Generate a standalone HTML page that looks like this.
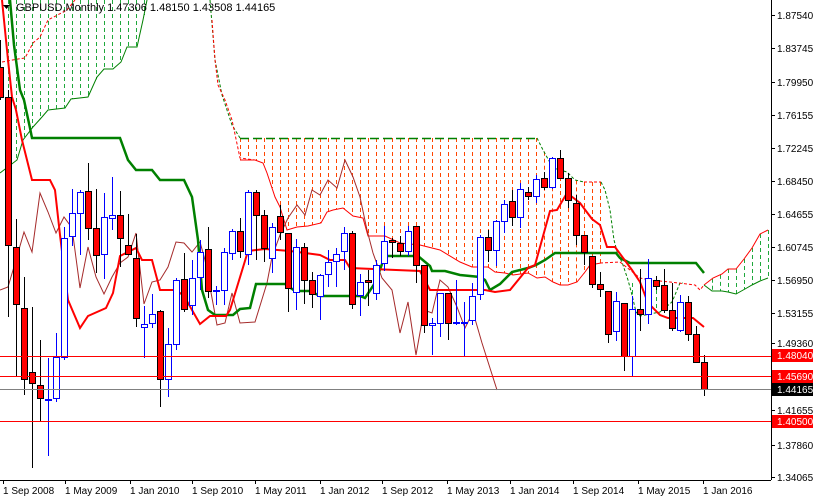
<!DOCTYPE html>
<html><head><meta charset="utf-8">
<style>
html,body{margin:0;padding:0;background:#fff;}
svg{display:block;font-family:"Liberation Sans",sans-serif;}
</style></head>
<body>
<svg id="s" width="813" height="499" viewBox="0 0 813 499" xmlns="http://www.w3.org/2000/svg">
<rect width="813" height="499" fill="#fff"/>
<g id="clouds"></g>
<g id="lines" fill="none"></g>
<g id="candles"></g>
<line x1="0" y1="356.5" x2="771" y2="356.5" stroke="#f00"/>
<line x1="0" y1="376.5" x2="771" y2="376.5" stroke="#f00"/>
<line x1="0" y1="389.5" x2="771" y2="389.5" stroke="#808080"/>
<line x1="0" y1="421.5" x2="771" y2="421.5" stroke="#f00"/>
<line x1="771.5" y1="0" x2="771.5" y2="480" stroke="#000"/>
<line x1="0" y1="480.5" x2="771" y2="480.5" stroke="#000"/>
<g id="ticks" stroke="#000"></g>
<g font-size="10" fill="#000">
<text x="777" y="19">1.87540</text>
<text x="777" y="52">1.83745</text>
<text x="777" y="86">1.79950</text>
<text x="777" y="119">1.76155</text>
<text x="777" y="152">1.72245</text>
<text x="777" y="185">1.68450</text>
<text x="777" y="218">1.64655</text>
<text x="777" y="251">1.60745</text>
<text x="777" y="284">1.56950</text>
<text x="777" y="317">1.53155</text>
<text x="777" y="347">1.49360</text>
<text x="777" y="414">1.41655</text>
<text x="777" y="449">1.37860</text>
<text x="777" y="481">1.34065</text>
</g>
<rect x="772" y="349" width="41" height="13" fill="#f00"/>
<text x="777" y="359" font-size="10" fill="#fff">1.48040</text>
<rect x="772" y="370" width="41" height="13" fill="#f00"/>
<text x="777" y="380" font-size="10" fill="#fff">1.45690</text>
<rect x="772" y="383" width="41" height="13" fill="#000"/>
<text x="777" y="393" font-size="10" fill="#fff">1.44165</text>
<rect x="772" y="415" width="41" height="13" fill="#f00"/>
<text x="777" y="425" font-size="10" fill="#fff">1.40500</text>
<g font-size="10" fill="#000">
<text x="3" y="494">1 Sep 2008</text>
<text x="65" y="494">1 May 2009</text>
<text x="130" y="494">1 Jan 2010</text>
<text x="192" y="494">1 Sep 2010</text>
<text x="255" y="494">1 May 2011</text>
<text x="320" y="494">1 Jan 2012</text>
<text x="382" y="494">1 Sep 2012</text>
<text x="447" y="494">1 May 2013</text>
<text x="510" y="494">1 Jan 2014</text>
<text x="573" y="494">1 Sep 2014</text>
<text x="638" y="494">1 May 2015</text>
<text x="703" y="494">1 Jan 2016</text>
</g>
<rect x="0" y="0" width="260" height="14" fill="none"/>
<path d="M3 5 L10 5 L6.5 9 Z" fill="#000"/>
<text x="16" y="11" font-size="11" fill="#000">GBPUSD,Monthly  1.47306 1.48150 1.43508 1.44165</text>
</svg>
<script>
var NS="http://www.w3.org/2000/svg";
function el(p,t,a){var e=document.createElementNS(NS,t);for(var k in a)e.setAttribute(k,a[k]);document.getElementById(p).appendChild(e);return e;}
function interp(pts,x){for(var i=0;i<pts.length-1;i++){if(x>=pts[i][0]&&x<=pts[i+1][0]){var t=(x-pts[i][0])/((pts[i+1][0]-pts[i][0])||1);return pts[i][1]+t*(pts[i+1][1]-pts[i][1]);}}return null;}
function pl(p,pts,stroke,w,dash){var a={points:pts.map(function(q){return q.join(",")}).join(" "),stroke:stroke,"stroke-width":w,fill:"none"};if(dash)a["stroke-dasharray"]=dash;el(p,"polyline",a);}
// left green cloud
var gLow=[[0,173],[17,160],[23,140],[33,127],[42,117],[48,110],[65,108],[71,99],[88,97],[97,77],[104,69],[113,69],[121,62],[127,47],[137,47],[143,20],[147,0]];
for(var x=8;x<=144;x+=8){var y=interp(gLow,x);el("clouds","line",{x1:x+.5,y1:0,x2:x+.5,y2:y,stroke:"#1fa83c","stroke-dasharray":"4 3"});}
pl("clouds",gLow,"#008000",1);
pl("clouds",[[2,62],[18,59],[25,58],[33,43],[40,37],[48,20],[67,10],[75,0]],"#f00",1,"3 2");
// orange cloud
var oTop=[[240,138],[537,138],[543,150],[553,168],[567,172],[575,180],[580,182],[601,182]];
var oLow=[[240,160],[255,160],[263,163],[267,173],[272,188],[275,197],[280,207],[283,217],[287,230],[297,227],[308,226],[321,223],[327,212],[333,210],[343,208],[353,216],[363,218],[368,236],[385,236],[400,243],[420,245],[440,250],[460,262],[472,267],[488,267],[495,272],[505,273],[513,275],[528,273],[537,278],[545,277],[553,282],[560,285],[568,285],[577,282],[585,272],[590,265],[601,263]];
for(var x=240;x<=600;x+=8){var a=interp(oTop,x),b=interp(oLow,x);if(a!=null&&b!=null&&b>a)el("clouds","line",{x1:x+.5,y1:a,x2:x+.5,y2:b,stroke:"#ff4500","stroke-dasharray":"4 3"});}
pl("clouds",[[240,138.5],[537,138.5]],"#008000",1.5,"9 4");
pl("clouds",[[537,138],[543,150],[553,168],[567,172],[575,180],[584,182]],"#008000",1,"3 2");
pl("clouds",[[584,182],[601,182]],"#f00",1,"3 2");
pl("clouds",oLow,"#f00",1);
pl("clouds",[[210,0],[215,60],[222,95],[232,125],[240,138]],"#008000",1,"3 2");
pl("clouds",[[212,20],[215,60],[218,85],[225,100],[232,120],[240,158],[255,160]],"#f00",1,"3 2");
pl("clouds",[[601,182],[605,190],[610,210],[614,240],[618,255],[622,262],[628,280],[632,295],[636,312],[640,316],[660,312],[672,302],[680,283],[683,283]],"#008000",1,"3 2");
for(var x=632;x<=680;x+=8){var b=interp([[628,303],[640,316],[660,312],[672,302],[680,283]],x);el("clouds","line",{x1:x+.5,y1:283,x2:x+.5,y2:b,stroke:"#1fa83c","stroke-dasharray":"4 3"});}
pl("clouds",[[600,263],[620,262],[640,278],[650,280],[670,282],[695,285],[700,290],[704,285]],"#f00",1,"3 2");
// future cloud
var fTop=[[704,285],[713,278],[722,274],[728,269],[736,269],[744,259],[752,248],[760,234],[768,230]];
var fLow=[[704,285],[712,291],[722,291],[728,292],[736,294],[745,289],[752,285],[760,281],[768,278]];
for(var x=712;x<=768;x+=8){el("clouds","line",{x1:x+.5,y1:interp(fTop,x),x2:x+.5,y2:interp(fLow,x),stroke:"#1fa83c","stroke-dasharray":"4 3"});}
pl("clouds",fTop,"#f00",1);pl("clouds",fLow,"#008000",1);
// chikou
pl("lines",[[0,290],[8,287],[16,260],[24,232],[32,252],[40,193],[48,212],[56,233],[64,217],[72,228],[80,288],[88,247],[96,277],[104,294],[112,277],[120,263],[128,257],[136,233],[144,304],[152,282],[160,280],[168,267],[176,242],[184,243],[192,252],[200,242],[205,260],[217,325],[225,323],[232,293],[240,323],[255,322],[267,283],[272,257],[280,235],[288,218],[297,205],[305,215],[312,190],[320,195],[328,180],[337,188],[345,160],[353,177],[360,197],[367,230],[373,253],[382,278],[392,290],[400,333],[408,302],[416,355],[424,310],[432,313],[440,280],[448,287],[457,307],[465,328],[473,312],[482,343],[497,390]],"#a52a2a",1);
// kijun
pl("lines",[[10,0],[14,45],[20,90],[24,100],[30,128],[32,138],[120,138],[128,160],[136,170],[152,170],[160,180],[184,180],[192,197],[198,240],[202,290],[208,310],[215,315],[233,315],[240,309],[250,308],[256,284],[285,284],[295,291],[310,291],[320,296],[360,296],[365,298],[375,283],[385,256],[418,256],[430,266],[432,271],[445,271],[460,275],[480,277],[485,280],[490,290],[500,284],[512,272],[528,268],[536,265],[545,260],[555,253],[616,253],[620,258],[630,263],[696,263],[704,273]],"#008000",2.5);
// tenkan
pl("lines",[[2,0],[8,60],[12,97],[16,110],[22,140],[32,180],[50,180],[55,190],[60,235],[68,300],[80,328],[88,316],[106,308],[113,293],[120,256],[136,248],[142,260],[152,260],[160,290],[176,290],[184,296],[200,324],[210,316],[226,316],[230,310],[248,251],[265,249],[290,251],[320,255],[330,260],[345,260],[350,268],[420,271],[430,290],[485,290],[495,292],[510,290],[528,268],[535,265],[550,211],[557,210],[567,193],[580,203],[592,219],[600,225],[607,247],[615,247],[632,270],[640,282],[648,303],[660,315],[668,318],[693,318],[704,327]],"#f00",2);
// candles [x, bodyTop, bodyBot, wickTop, wickBot, red?]
var C=[[0,67,97,40,100,1],[8,97,245,90,317,1],[16,247,304,219,377,1],[24,308,379,277,395,1],[32,372,383,307,468,1],[40,385,398,340,421,1],[48,399,400,358,456,0],[56,357,398,333,402,0],[64,238,357,227,360,0],[72,213,236,189,246,0],[80,192,213,190,255,0],[88,191,228,163,240,1],[96,228,255,189,273,1],[104,217,254,193,279,0],[112,215,218,177,230,0],[120,215,238,191,267,1],[128,245,254,214,254,1],[136,258,318,234,327,1],[144,324,327,306,358,0],[152,314,323,294,328,0],[160,311,379,310,407,1],[168,344,379,328,397,0],[176,280,344,278,350,0],[184,279,309,253,312,1],[192,278,305,260,315,0],[200,252,277,240,290,0],[208,249,291,227,298,1],[216,290,291,286,305,0],[224,252,290,248,305,0],[232,231,253,229,260,0],[240,231,251,218,258,1],[248,192,254,190,265,0],[256,192,215,190,260,1],[264,215,248,210,262,1],[272,227,258,223,273,0],[280,216,232,205,240,1],[288,233,288,233,312,1],[296,247,292,239,310,0],[304,247,280,243,304,1],[312,280,294,272,308,1],[320,275,296,274,320,0],[328,262,274,250,287,0],[336,254,261,248,287,0],[344,233,251,227,270,0],[352,233,304,231,309,1],[360,282,295,274,316,0],[368,280,282,270,306,1],[376,265,293,260,300,0],[384,241,263,226,271,0],[392,240,242,238,258,1],[400,243,251,236,256,1],[408,231,251,226,256,0],[416,226,265,226,283,1],[424,265,325,265,333,1],[432,323,325,318,355,0],[440,293,323,293,337,0],[448,293,323,293,340,1],[456,322,323,280,325,0],[464,322,323,302,356,0],[472,296,320,283,325,0],[480,237,294,235,300,0],[488,237,250,230,262,1],[496,221,250,220,266,0],[504,204,221,200,233,0],[512,201,217,190,226,1],[520,189,217,183,228,0],[528,192,196,187,200,1],[536,179,196,175,203,0],[544,178,187,172,190,1],[552,158,187,157,189,0],[560,158,178,150,179,1],[568,178,200,173,208,1],[576,203,235,195,245,1],[584,235,252,235,265,1],[592,256,284,256,288,1],[600,284,289,272,297,1],[608,291,334,291,343,1],[616,301,331,292,341,0],[624,303,356,303,371,1],[632,309,356,296,376,0],[640,309,314,269,331,1],[648,278,314,259,324,0],[656,280,286,276,290,1],[664,285,310,269,313,1],[672,310,328,283,331,1],[680,302,330,295,332,0],[688,302,334,296,341,1],[696,334,362,326,362,1],[704,362,389,355,396,1]];
C.forEach(function(c){var x=c[0]+.5,r=c[5];var col=r?"#000":"#00f";
el("candles","line",{x1:x,y1:c[3],x2:x,y2:c[4],stroke:col});
var h=Math.max(1,c[2]-c[1]);el("candles","rect",{x:c[0]-3+.5,y:c[1]+.5,width:6,height:h,fill:r?"#f00":"#fff",stroke:col});});
// ticks
[15,48,82,115,148,181,214,247,280,313,343,410,445,477].forEach(function(y){el("ticks","line",{x1:771,y1:y+.5,x2:775,y2:y+.5});});
[3,65,130,192,255,320,382,447,510,573,638,703].forEach(function(x){el("ticks","line",{x1:x+.5,y1:480,x2:x+.5,y2:484});});
</script>
</body></html>
